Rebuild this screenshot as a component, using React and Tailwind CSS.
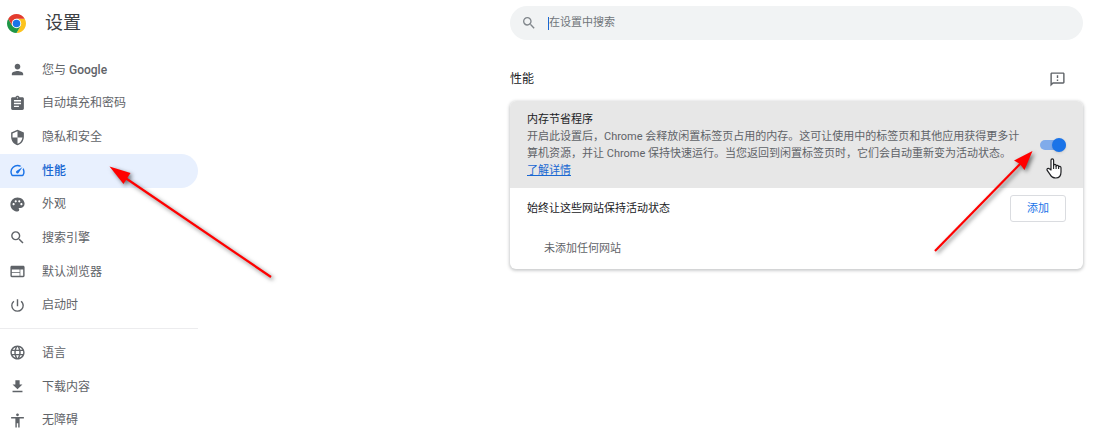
import React, { useState } from "react";
import {
  MdPerson,
  MdAssignment,
  MdSecurity,
  MdSpeed,
  MdPalette,
  MdSearch,
  MdWeb,
  MdPowerSettingsNew,
  MdLanguage,
  MdDownload,
  MdAccessibility,
  MdOutlineFeedback,
} from "react-icons/md";

const primaryItems = [
  { label: "您与 ", brand: "Google", Icon: MdPerson },
  { label: "自动填充和密码", Icon: MdAssignment },
  { label: "隐私和安全", Icon: MdSecurity },
  { label: "性能", Icon: MdSpeed, active: true },
  { label: "外观", Icon: MdPalette },
  { label: "搜索引擎", Icon: MdSearch },
  { label: "默认浏览器", Icon: MdWeb },
  { label: "启动时", Icon: MdPowerSettingsNew },
];

const secondaryItems = [
  { label: "语言", Icon: MdLanguage },
  { label: "下载内容", Icon: MdDownload },
  { label: "无障碍", Icon: MdAccessibility },
];

function ChromeLogo() {
  return (
    <svg viewBox="0 0 48 48" className="size-[19px] shrink-0" aria-hidden="true">
      <path d="M24 12H44.78A24 24 0 0 1 24 48L34.39 30Z" fill="#fcc31e" />
      <path d="M13.61 30 3.22 12A24 24 0 0 0 24 48L34.39 30 24 34Z" fill="#1e9646" />
      <path d="M24 12H44.78A24 24 0 0 0 3.22 12L13.61 30Z" fill="#e33b2e" />
      <circle cx="24" cy="24" r="12" fill="#fff" />
      <circle cx="24" cy="24" r="9.5" fill="#1a73e8" />
    </svg>
  );
}

function NavItem({ label, brand, Icon, active }) {
  return (
    <li className="flex flex-1">
      <a
        href="#"
        aria-current={active ? "page" : undefined}
        className={
          active
            ? "flex flex-1 items-center gap-4 rounded-r-full bg-[#e8f0fe] pl-[9px] font-medium text-[#1967d2]"
            : "flex flex-1 items-center gap-4 rounded-r-full pl-[9px] text-[#5f6368]"
        }
      >
        <Icon
          className={active ? "size-[17px] shrink-0 text-[#1a73e8]" : "size-[17px] shrink-0"}
          aria-hidden="true"
        />
        <span>
          {label}
          {brand && <span className="font-medium">{brand}</span>}
        </span>
      </a>
    </li>
  );
}

function Sidebar() {
  return (
    <aside className="w-[198px] shrink-0">
      <header className="flex h-[46px] items-center gap-[19px] pl-[7px]">
        <ChromeLogo />
        <h1 className="text-lg text-[#3c4043]">设置</h1>
      </header>
      <nav className="pt-[7px] text-xs">
        <ul className="flex h-[269px] flex-col">
          {primaryItems.map((item) => (
            <NavItem key={item.label} {...item} />
          ))}
        </ul>
        <hr className="mt-[6px] mb-[7px] border-[#ececee]" />
        <ul className="flex h-[101px] flex-col">
          {secondaryItems.map((item) => (
            <NavItem key={item.label} {...item} />
          ))}
        </ul>
      </nav>
    </aside>
  );
}

function Toggle({ checked, onChange }) {
  return (
    <span className="relative flex h-[14px] w-[26px] shrink-0 items-center">
      <input
        id="memory-saver"
        type="checkbox"
        role="switch"
        checked={checked}
        onChange={onChange}
        className="peer h-[10px] w-[26px] cursor-pointer appearance-none rounded-full bg-gray-400 checked:bg-[#80abea]"
      />
      <span className="pointer-events-none absolute left-0 size-[14px] rounded-full bg-white shadow peer-checked:left-3 peer-checked:bg-[#1a73e8]" />
    </span>
  );
}

function HandCursor() {
  return (
    <svg
      viewBox="0 0 16 21"
      className="pointer-events-none absolute top-[57px] right-[21px] z-10 h-[21px] w-4"
      aria-hidden="true"
    >
      <path
        d="M5 12V2.2C5 .4 7.6.4 7.6 2.2V7.4C7.8 5.9 10 6 10.1 7.5V8.2C10.4 6.9 12.4 7 12.6 8.4V9C13 7.9 14.9 8.1 15 9.8V14C15 17.8 13 20 9.8 20 6.8 20 5.3 18.8 4 16.4L1.2 12.4C.4 10.8 2.2 9.6 3.4 10.8Z"
        fill="#fff"
        stroke="#202124"
        strokeWidth="1.2"
        strokeLinejoin="round"
      />
      <path d="M7.6 7V11M10.1 8V11M12.6 9V11" stroke="#202124" strokeWidth="1.1" fill="none" />
    </svg>
  );
}

function NavArrow() {
  return (
    <svg
      viewBox="0 0 180 130"
      className="pointer-events-none absolute top-[157px] left-[100px] h-[130px] w-[180px] drop-shadow-[2px_2px_2px_rgba(0,0,0,0.55)]"
      aria-hidden="true"
    >
      <path d="M24 20 171 120" stroke="#f00" strokeWidth="2.2" />
      <path d="M9.500 9.500 30.500 16 27 21.500 23.500 27Z" fill="#f00" />
    </svg>
  );
}

function ToggleArrow() {
  return (
    <svg
      viewBox="0 0 120 120"
      className="pointer-events-none absolute top-[40px] right-[40px] h-[120px] w-[120px] drop-shadow-[2px_2px_2px_rgba(0,0,0,0.55)]"
      aria-hidden="true"
    >
      <path d="M12 110 99 21" stroke="#f00" strokeWidth="2.2" />
      <path d="M109.500 10 101.500 29 97 23 91 19.500Z" fill="#f00" />
    </svg>
  );
}

export default function App() {
  const [enabled, setEnabled] = useState(true);

  return (
    <div className="relative flex h-screen overflow-hidden bg-white font-[Roboto,'Noto_Sans_CJK_SC',sans-serif]">
      <Sidebar />
      <NavArrow />
      <main className="flex min-w-0 flex-1 justify-end pr-[10px]">
        <div className="w-full max-w-[573px]">
          <label className="mt-[6px] flex h-[34px] items-center gap-[11px] rounded-full bg-[#f1f3f4] pl-[11px]">
            <MdSearch className="size-4 shrink-0 text-[#80868b]" aria-hidden="true" />
            <span className="flex flex-1 items-center">
              <span className="h-[13px] w-px bg-[#1967d2]" aria-hidden="true" />
              <input
                type="search"
                aria-label="在设置中搜索"
                placeholder="在设置中搜索"
                className="w-full bg-transparent text-[11px] text-[#3c4043] outline-none placeholder:text-[#70757a]"
              />
            </span>
          </label>

          <div className="mt-[26px] flex h-[26px] items-center justify-between pr-[17px]">
            <h2 className="text-xs text-[#202124]">性能</h2>
            <button type="button" aria-label="发送反馈" className="text-[#5f6368]">
              <MdOutlineFeedback className="size-[17px]" />
            </button>
          </div>

          <section className="relative mt-[9px] rounded-md bg-white text-[11px] leading-[17px] shadow-[0_1px_3px_1px_rgba(60,64,67,0.25)]">
            <div className="flex items-center justify-between gap-4 rounded-t-md bg-[#e7e7e7] pt-[10px] pr-[17px] pb-[9px] pl-[17px]">
              <div className="max-w-[500px]">
                <label htmlFor="memory-saver" className="block text-[#202124]">
                  内存节省程序
                </label>
                <p className="text-[#5f6368]">
                  开启此设置后，Chrome 会释放闲置标签页占用的内存。这可让使用中的标签页和其他应用获得更多计算机资源，并让
                  Chrome 保持快速运行。当您返回到闲置标签页时，它们会自动重新变为活动状态。
                </p>
                <a href="#" className="block w-fit text-[#1967d2] underline">
                  了解详情
                </a>
              </div>
              <Toggle checked={enabled} onChange={() => setEnabled(!enabled)} />
            </div>
            <div className="flex h-10 items-center justify-between pr-[17px] pl-[17px] text-[#202124]">
              <h3>始终让这些网站保持活动状态</h3>
              <button
                type="button"
                className="h-[27px] w-14 rounded-[3px] border border-[#dadce0] text-[#1a73e8]"
              >
                添加
              </button>
            </div>
            <p className="flex h-[41px] items-center pl-[34px] text-[#5f6368]">未添加任何网站</p>
            <ToggleArrow />
            <HandCursor />
          </section>
        </div>
      </main>
    </div>
  );
}
